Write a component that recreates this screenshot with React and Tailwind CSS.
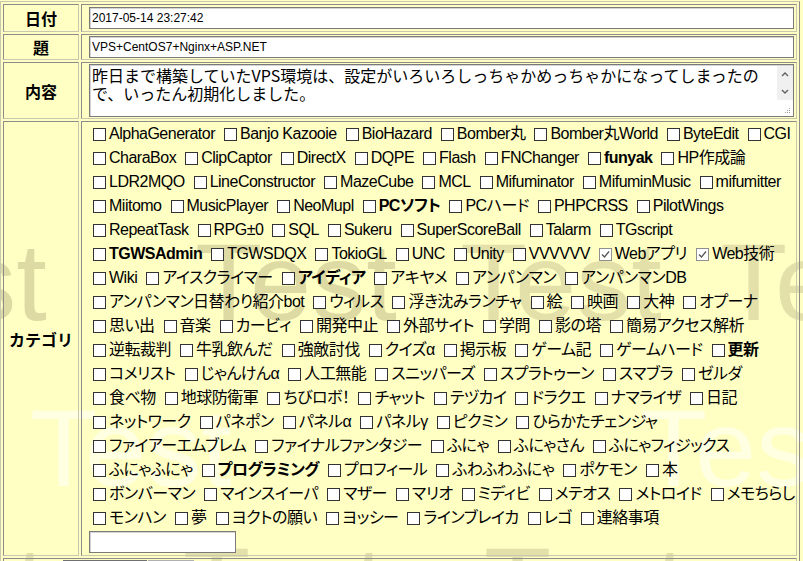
import React from 'react';

const rows = [
  ['AlphaGenerator', 'Banjo Kazooie', 'BioHazard', 'Bomber丸', 'Bomber丸World', 'ByteEdit', 'CGI'],
  ['CharaBox', 'ClipCaptor', 'DirectX', 'DQPE', 'Flash', 'FNChanger', 'funyak', 'HP作成論'],
  ['LDR2MQO', 'LineConstructor', 'MazeCube', 'MCL', 'Mifuminator', 'MifuminMusic', 'mifumitter'],
  ['Miitomo', 'MusicPlayer', 'NeoMupl', 'PCソフト', 'PCハード', 'PHPCRSS', 'PilotWings'],
  ['RepeatTask', 'RPG±0', 'SQL', 'Sukeru', 'SuperScoreBall', 'Talarm', 'TGscript'],
  ['TGWSAdmin', 'TGWSDQX', 'TokioGL', 'UNC', 'Unity', 'VVVVVV', 'Webアプリ', 'Web技術'],
  ['Wiki', 'アイスクライマー', 'アイディア', 'アキヤメ', 'アンパンマン', 'アンパンマンDB'],
  ['アンパンマン日替わり紹介bot', 'ウィルス', '浮き沈みランチャ', '絵', '映画', '大神', 'オプーナ'],
  ['思い出', '音楽', 'カービィ', '開発中止', '外部サイト', '学問', '影の塔', '簡易アクセス解析'],
  ['逆転裁判', '牛乳飲んだ', '強敵討伐', 'クイズα', '掲示板', 'ゲーム記', 'ゲームハード', '更新'],
  ['コメリスト', 'じゃんけんα', '人工無能', 'スニッパーズ', 'スプラトゥーン', 'スマブラ', 'ゼルダ'],
  ['食べ物', '地球防衛軍', 'ちびロボ！', 'チャット', 'テヅカイ', 'ドラクエ', 'ナマライザ', '日記'],
  ['ネットワーク', 'パネポン', 'パネルα', 'パネルγ', 'ピクミン', 'ひらかたチェンジャ'],
  ['ファイアーエムブレム', 'ファイナルファンタジー', 'ふにゃ', 'ふにゃさん', 'ふにゃフィジックス'],
  ['ふにゃふにゃ', 'プログラミング', 'プロフィール', 'ふわふわふにゃ', 'ポケモン', '本'],
  ['ボンバーマン', 'マインスイーパ', 'マザー', 'マリオ', 'ミディビ', 'メテオス', 'メトロイド', 'メモちらし'],
  ['モンハン', '夢', 'ヨクトの願い', 'ヨッシー', 'ラインブレイカ', 'レゴ', '連絡事項']
];

const boldTags = ['funyak', 'PCソフト', 'TGWSAdmin', 'アイディア', '更新', 'プログラミング'];
const checkedTags = ['Webアプリ', 'Web技術'];

// background stamp, "Test" scattered behind the form
const stamps = [
  { x: -150, y: -98, c: 'text-[#e8e4ae]' },
  { x: 200, y: -98, c: 'text-[#e8e4ae]' },
  { x: 470, y: -98, c: 'text-[#e8e4ae]' },
  { x: -155, y: 227, c: 'text-[#dedaa4]' },
  { x: 195, y: 227, c: 'text-[#dedaa4]' },
  { x: 460, y: 227, c: 'text-[#e4e0aa]' },
  { x: 720, y: 227, c: 'text-[#e4e0aa]' },
  { x: 30, y: 393, c: 'text-[#ffffe2]' },
  { x: 640, y: 393, c: 'text-[#ffffe2]' },
  { x: -156, y: 531, c: 'text-[#e4e0aa]' },
  { x: 183, y: 531, c: 'text-[#e4e0aa]' },
  { x: 484, y: 531, c: 'text-[#e4e0aa]' }
];

function Watermark() {
  return (
    <div className="absolute inset-0 pointer-events-none overflow-hidden font-['Liberation_Sans',sans-serif] text-[110px] leading-none">
      {stamps.map((s, i) => (
        <span key={i} className={`absolute whitespace-nowrap ${s.c}`} style={{ left: s.x, top: s.y }}>
          Test
        </span>
      ))}
    </div>
  );
}

function Box({ checked }) {
  return (
    <span
      className={`inline-flex items-center justify-center w-[13px] h-[13px] ml-[4px] mr-[3px] shrink-0 bg-white border ${
        checked ? 'border-[#8f8f8f]' : 'border-[#333333]'
      }`}
    >
      {checked && (
        <svg width="9" height="9" viewBox="0 0 9 9">
          <path d="M1 4.5 L3.5 7 L8 1.5" fill="none" stroke="#555555" strokeWidth="1.3" />
        </svg>
      )}
    </span>
  );
}

function Cell({ children, className = '', colSpan }) {
  return (
    <td
      colSpan={colSpan}
      className={`p-0 border border-t-[#8c8c8c] border-l-[#8c8c8c] border-b-[#c8c8b0] border-r-[#c8c8b0] ${className}`}
    >
      {children}
    </td>
  );
}

function Label({ children }) {
  return (
    <Cell className="w-[76px] text-center align-middle whitespace-nowrap font-bold text-[16px] text-black">
      {children}
    </Cell>
  );
}

function TextBox({ value, className = '' }) {
  return (
    <div
      className={`h-[22px] bg-white border border-[#7a7a7a] shadow-[inset_1px_1px_0_#d4d4d4] flex items-center px-[2px] font-['Liberation_Sans',sans-serif] text-[12px] text-black ${className}`}
    >
      {value}
    </div>
  );
}

export default function App() {
  return (
    <div className="relative h-[561px] w-[803px] bg-[#ffffc4] overflow-hidden font-['Noto_Sans_CJK_JP',sans-serif] text-black">
      <Watermark />
      <table className="relative table-fixed w-[800px] border-separate border-spacing-[2px] border border-t-[#c8c8b0] border-l-[#c8c8b0] border-b-[#8c8c8c] border-r-[#8c8c8c] mt-[1px]">
        <tbody>
          <tr className="h-[28px]">
            <Label>日付</Label>
            <Cell className="pl-[7px] pr-[2px]">
              <TextBox value="2017-05-14 23:27:42" />
            </Cell>
          </tr>
          <tr className="h-[25px]">
            <Label>題</Label>
            <Cell className="pl-[7px] pr-[2px]">
              <TextBox value="VPS+CentOS7+Nginx+ASP.NET" />
            </Cell>
          </tr>
          <tr className="h-[57px]">
            <Label>内容</Label>
            <Cell className="pl-[7px] pr-[2px]">
              <div className="h-[53px] bg-white border border-[#7a7a7a] shadow-[inset_1px_1px_0_#d4d4d4] flex">
                <div className="flex-1 min-w-0 overflow-hidden pl-[2px] pt-[1px] text-[16px] leading-[18px] whitespace-nowrap">
                  昨日まで構築していたVPS環境は、設定がいろいろしっちゃかめっちゃかになってしまったの
                  <br />
                  で、いったん初期化しました。
                </div>
                <div className="w-[16px] shrink-0 flex flex-col">
                  <div className="h-[34px] mt-[1px] bg-[#f0f0f0] flex flex-col items-center justify-between py-[5px]">
                    <svg width="8" height="6" viewBox="0 0 8 6">
                      <path d="M1 5 L4 2 L7 5" fill="none" stroke="#606060" strokeWidth="1.4" />
                    </svg>
                    <svg width="8" height="6" viewBox="0 0 8 6">
                      <path d="M1 1 L4 4 L7 1" fill="none" stroke="#606060" strokeWidth="1.4" />
                    </svg>
                  </div>
                  <div className="flex-1 flex items-end justify-end pr-[2px] pb-[2px]">
                    <svg width="7" height="7" viewBox="0 0 7 7">
                      <rect x="5" y="1" width="1" height="1" fill="#a0a0a0" />
                      <rect x="3" y="3" width="1" height="1" fill="#a0a0a0" />
                      <rect x="5" y="3" width="1" height="1" fill="#a0a0a0" />
                      <rect x="1" y="5" width="1" height="1" fill="#a0a0a0" />
                      <rect x="3" y="5" width="1" height="1" fill="#a0a0a0" />
                      <rect x="5" y="5" width="1" height="1" fill="#a0a0a0" />
                    </svg>
                  </div>
                </div>
              </div>
            </Cell>
          </tr>
          <tr>
            <Label>カテゴリ</Label>
            <Cell className="pl-[7px] pr-[2px] pt-0 pb-[1px] overflow-hidden">
              <div className="flex flex-col text-[16px] leading-[24px] font-['Liberation_Sans','Noto_Sans_CJK_JP',sans-serif] tracking-[-0.5px] [font-feature-settings:'palt']">
                {rows.map((row, i) => (
                  <div key={i} className="flex items-center h-[24px] whitespace-nowrap gap-[5px]">
                    {row.map(tag => (
                      <span key={tag} className={`inline-flex items-center ${boldTags.includes(tag) ? 'font-bold' : ''}`}>
                        <Box checked={checkedTags.includes(tag)} />
                        {tag}
                      </span>
                    ))}
                  </div>
                ))}
                <TextBox value="" className="w-[147px] mt-[1px] mb-[1px]" />
              </div>
            </Cell>
          </tr>
          <tr className="h-[28px]">
            <Cell colSpan={2} className="align-top pt-[1px]">
              <div className="flex pl-[59px] h-[24px]">
                <div className="w-[84px] h-[22px] bg-[#e1e1e1] border border-[#707070]" />
                <div className="w-[46px] h-[22px] ml-[1px] bg-[#e9e9e9] border border-[#b0b0b0]" />
              </div>
            </Cell>
          </tr>
        </tbody>
      </table>
    </div>
  );
}
